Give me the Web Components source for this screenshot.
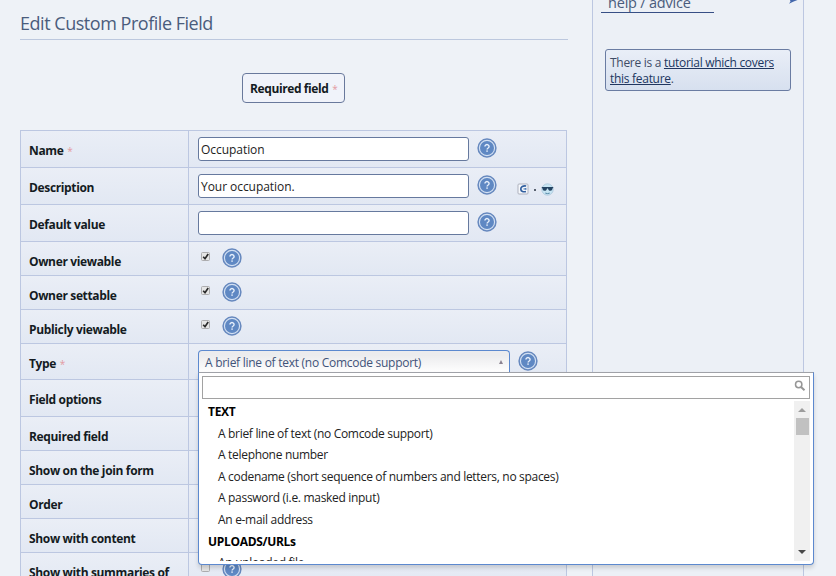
<!DOCTYPE html>
<html lang="en">
<head>
    <meta charset="UTF-8">
    <meta name="viewport" content="width=device-width, initial-scale=1.0">
    <title>Edit Custom Profile Field</title>
    <style>
        html, body {
            margin: 0;
            height: 576px;
            overflow: hidden;
        }

        body {
            background: #eef2f7;
            font-family: "Open Sans", "Noto Sans", sans-serif;
            font-size: 12px;
            color: #141b22;
        }
    </style>
</head>
<body>
    <profile-page>
        <page-title>Edit Custom Profile Field</page-title>
        <required-key>Required field</required-key>
        <field-table>
            <field-row label="Name" required><text-field value="Occupation"></text-field><help-icon></help-icon></field-row>
            <field-row label="Description"><text-field value="Your occupation."></text-field><help-icon></help-icon><comcode-tools></comcode-tools></field-row>
            <field-row label="Default value"><text-field></text-field><help-icon></help-icon></field-row>
            <field-row label="Owner viewable" size="small"><tick-box checked></tick-box><help-icon></help-icon></field-row>
            <field-row label="Owner settable" size="small"><tick-box checked></tick-box><help-icon></help-icon></field-row>
            <field-row label="Publicly viewable" size="small"><tick-box checked></tick-box><help-icon></help-icon></field-row>
            <field-row label="Type" required size="medium"><type-select value="A brief line of text (no Comcode support)"></type-select><help-icon></help-icon></field-row>
            <field-row label="Field options"></field-row>
            <field-row label="Required field" size="small"></field-row>
            <field-row label="Show on the join form" size="small"></field-row>
            <field-row label="Order" size="small"></field-row>
            <field-row label="Show with content" size="small"></field-row>
            <field-row label="Show with summaries of" size="small"><tick-box></tick-box><help-icon></help-icon></field-row>
        </field-table>
        <help-panel slot="side" heading="help / advice">There is a <u>tutorial which covers this feature</u>.</help-panel>
    </profile-page>

    <script>
        class BaseElement extends HTMLElement {
            constructor() {
                super();
                this.attachShadow({ mode: 'open' });
            }

            connectedCallback() {
                this.shadowRoot.innerHTML = this.render();
            }
        }

        class ProfilePage extends BaseElement {
            render() {
                return `
                <style>
                    :host { display: flex; height: 576px; overflow: hidden; }
                    main { width: 548px; margin-left: 20px; flex: none; }
                    aside { margin-left: 24px; flex: none; display: flex; }
                </style>
                <main><slot></slot></main>
                <aside><slot name="side"></slot></aside>
                `;
            }
        }
        customElements.define('profile-page', ProfilePage);

        class PageTitle extends BaseElement {
            render() {
                return `
                <style>
                    :host { display: block; height: 39px; border-bottom: 1px solid #bcc8de; }
                    h1 {
                        margin: 0;
                        padding-top: 11px;
                        font-size: 18px;
                        line-height: 25px;
                        font-weight: 400;
                        letter-spacing: -0.47px;
                        color: #4a5c7c;
                        white-space: nowrap;
                    }
                </style>
                <h1><slot></slot></h1>
                `;
            }
        }
        customElements.define('page-title', PageTitle);

        class RequiredKey extends BaseElement {
            render() {
                return `
                <style>
                    :host { display: flex; justify-content: center; padding: 33px 1px 27px 0; }
                    div {
                        box-sizing: border-box;
                        width: 103px;
                        height: 30px;
                        padding-left: 7px;
                        border: 1px solid #69799c;
                        border-radius: 4px;
                        background: #f0f3fa;
                        line-height: 29px;
                        font-weight: 700;
                        letter-spacing: -0.4px;
                        white-space: nowrap;
                    }
                    span { margin-left: 1px; font-weight: 400; font-size: 10px; color: #e39aa2; }
                </style>
                <div><slot></slot> <span>*</span></div>
                `;
            }
        }
        customElements.define('required-key', RequiredKey);

        class FieldTable extends BaseElement {
            render() {
                return `
                <style>
                    :host {
                        display: block;
                        box-sizing: border-box;
                        width: 547px;
                        border: 1px solid #bcc7e1;
                        border-width: 1px 1px 0;
                    }
                </style>
                <slot></slot>
                `;
            }
        }
        customElements.define('field-table', FieldTable);

        class FieldRow extends BaseElement {
            render() {
                const star = this.hasAttribute('required') ? ' <span>*</span>' : '';
                return `
                <style>
                    :host {
                        display: flex;
                        box-sizing: border-box;
                        height: 37px;
                        border-bottom: 1px solid #bcc7e1;
                        background: linear-gradient(#eaeef6, #e2e8f3);
                    }
                    :host([size=small]) { height: 34px; }
                    :host([size=medium]) { height: 36px; }
                    .label {
                        box-sizing: border-box;
                        width: 168px;
                        flex: none;
                        padding: 11px 0 0 8px;
                        border-right: 1px solid #bcc7e1;
                        line-height: 18px;
                        font-weight: 700;
                        letter-spacing: -0.35px;
                        white-space: nowrap;
                    }
                    .label span { margin-left: 1px; font-weight: 400; font-size: 10px; color: #e39aa2; }
                    .value { display: flex; align-items: flex-start; padding: 6px 0 0 9px; }
                    :host([size=small]) .value { padding-top: 5px; }
                </style>
                <div class="label">${this.getAttribute('label')}${star}</div>
                <div class="value"><slot></slot></div>
                `;
            }
        }
        customElements.define('field-row', FieldRow);

        class TextField extends BaseElement {
            render() {
                return `
                <style>
                    :host {
                        display: block;
                        box-sizing: border-box;
                        width: 271px;
                        height: 24px;
                        margin-right: 8px;
                        padding-left: 2px;
                        border: 1px solid #66799e;
                        border-radius: 3px;
                        background: #fff;
                        line-height: 23px;
                        letter-spacing: -0.05px;
                        color: #222;
                    }
                </style>
                ${this.getAttribute('value') || ''}
                `;
            }
        }
        customElements.define('text-field', TextField);

        class HelpIcon extends BaseElement {
            render() {
                return `
                <style>
                    :host { display: block; width: 20px; height: 20px; margin-top: 1px; }
                    svg { display: block; }
                </style>
                <svg width="20" height="20" viewBox="0 0 20 20">
                    <circle cx="10" cy="10" r="8.9" fill="#d3e0f3" stroke="#6688be" stroke-width="1.5"/>
                    <circle cx="10" cy="10" r="7" fill="#5f88c3"/>
                    <path d="M7.9 8.4a2.1 1.9 0 1 1 3.300 1.600c-.8.5-1.100.7-1.100 1.400" fill="none" stroke="#e6effb" stroke-width="1.400"/>
                    <rect x="9.300" y="12.400" width="1.500" height="1.400" fill="#e6effb"/>
                </svg>
                `;
            }
        }
        customElements.define('help-icon', HelpIcon);

        class ComcodeTools extends BaseElement {
            render() {
                return `
                <style>
                    :host { display: flex; align-items: center; margin: 8px 0 0 20px; gap: 5px; height: 14px; }
                    i { width: 2px; height: 2px; background: #59616f; margin-top: 2px; }
                    svg { display: block; }
                </style>
                <svg width="12" height="12" viewBox="0 0 12 12">
                    <rect x="1" y="1" width="10" height="10" rx="1" fill="#f6f8fc" stroke="#aeb1bd"/>
                    <path d="M9.2 3C6 2.500 3.700 3.900 3.800 6.100 3.900 8.500 6.400 9.200 9 8.500" fill="none" stroke="#315f9f" stroke-width="1.700"/>
                    <path d="M5.500 6 9.400 4.700v2.400z" fill="#4776b3"/>
                </svg>
                <i></i>
                <svg width="13" height="13" viewBox="0 0 13 13">
                    <circle cx="6.5" cy="6.5" r="5.7" fill="#c7e5f3" stroke="#a9c4d9" stroke-width=".8"/>
                    <path d="M.8 4h11.400v1l-.6.3c-.2 1.700-1 2.500-2.200 2.500S7.300 7 7 5.500H6C5.700 7 5 7.800 3.600 7.800S1.600 7 1.400 5.300L.8 5z" fill="#244463"/>
                    <path d="M4.300 10.100q2.200 1 4.400 0" fill="none" stroke="#5488a7"/>
                </svg>
                `;
            }
        }
        customElements.define('comcode-tools', ComcodeTools);

        class TickBox extends BaseElement {
            render() {
                const tick = this.hasAttribute('checked')
                    ? '<path d="M2.2 4.7 4 6.7 7.2 2" fill="none" stroke="#2a2a2a" stroke-width="1.7"/>' : '';
                return `
                <style>
                    :host { display: block; width: 9px; height: 9px; margin: 5px 12px 0 3px; }
                    svg { display: block; }
                </style>
                <svg width="9" height="9" viewBox="0 0 9 9">
                    <rect x=".5" y=".5" width="8" height="8" rx="1" fill="#e6e6e6" stroke="#adadaf"/>
                    ${tick}
                </svg>
                `;
            }
        }
        customElements.define('tick-box', TickBox);

        class TypeSelect extends BaseElement {
            render() {
                return `
                <style>
                    :host { display: block; position: relative; width: 312px; margin-right: 8px; }
                    .current {
                        box-sizing: border-box;
                        display: flex;
                        align-items: center;
                        justify-content: space-between;
                        height: 23px;
                        padding: 0 6px;
                        border: 1px solid #5c89cf;
                        border-bottom: 0;
                        border-radius: 4px 4px 0 0;
                        background: linear-gradient(#ececee 20%, #fff);
                        letter-spacing: -0.27px;
                        color: #3f5379;
                        white-space: nowrap;
                    }
                    .arrow { border: 2.5px solid transparent; border-top: 0; border-bottom: 4px solid #8b8291; }
                </style>
                <div class="current"><span>${this.getAttribute('value')}</span><i class="arrow"></i></div>
                <option-menu></option-menu>
                `;
            }
        }
        customElements.define('type-select', TypeSelect);

        class OptionMenu extends BaseElement {
            render() {
                const items = [
                    'A brief line of text (no Comcode support)',
                    'A telephone number',
                    'A codename (short sequence of numbers and letters, no spaces)',
                    'A password (i.e. masked input)',
                    'An e-mail address'
                ];
                return `
                <style>
                    :host {
                        position: absolute;
                        left: 0;
                        top: 22px;
                        z-index: 5;
                        box-sizing: border-box;
                        width: 616px;
                        height: 193px;
                        padding: 3px;
                        border: 1px solid #5c89cf;
                        border-top-color: #a0a2a8;
                        border-radius: 0 0 4px 4px;
                        background: #fff;
                        box-shadow: 0 3px 4px rgba(0, 0, 0, .15);
                        display: block;
                    }
                    .search {
                        box-sizing: border-box;
                        display: flex;
                        justify-content: flex-end;
                        height: 23px;
                        padding: 3px 3px 0 0;
                        border: 1px solid #a2a2a2;
                    }
                    .list { display: flex; height: 160px; margin-top: 2px; overflow: hidden; }
                    ul { flex: 1; margin: 0; padding: 0; list-style: none; white-space: nowrap; }
                    li { height: 21.6px; line-height: 21px; padding-left: 16px; letter-spacing: -0.31px; color: #222; }
                    li.group { padding-left: 6px; font-weight: 700; color: #000; }
                    .bar {
                        box-sizing: border-box;
                        display: flex;
                        flex-direction: column;
                        align-items: center;
                        width: 16px;
                        padding: 7px 0;
                        background: #f0f0f0;
                    }
                    .up { border: 4px solid transparent; border-top: 0; border-bottom-color: #9d9d9d; }
                    .thumb { width: 13px; height: 17px; margin: 6px 0 auto 1px; background: #c1c1c1; }
                    .down { border: 4px solid transparent; border-bottom: 0; border-top-color: #484848; }
                </style>
                <div class="search">
                    <svg width="12" height="12" viewBox="0 0 12 12">
                        <circle cx="4.7" cy="4.5" r="3.2" fill="none" stroke="#969696" stroke-width="1.5"/>
                        <path d="M7 7 10.5 10.3" stroke="#969696" stroke-width="2"/>
                    </svg>
                </div>
                <div class="list">
                    <ul>
                        <li class="group">TEXT</li>
                        ${items.map(item => `<li>${item}</li>`).join('')}
                        <li class="group">UPLOADS/URLs</li>
                        <li>An uploaded file</li>
                    </ul>
                    <div class="bar"><i class="up"></i><i class="thumb"></i><i class="down"></i></div>
                </div>
                `;
            }
        }
        customElements.define('option-menu', OptionMenu);

        class HelpPanel extends BaseElement {
            render() {
                return `
                <style>
                    :host {
                        display: block;
                        box-sizing: border-box;
                        width: 212px;
                        height: 576px;
                        border: 1px solid #bcc7e1;
                        border-width: 0 1px;
                        background: #ecf0f6;
                    }
                    header { display: flex; justify-content: space-between; height: 13px; }
                    h2 {
                        box-sizing: border-box;
                        width: 113px;
                        height: 13px;
                        margin: 0 0 0 8px;
                        padding-left: 7px;
                        border-bottom: 1px solid #374f85;
                        font-size: 14.5px;
                        line-height: 6px;
                        font-weight: 400;
                        letter-spacing: -0.2px;
                        color: #4a5c7c;
                        white-space: nowrap;
                    }
                    header svg { margin-right: 5px; }
                    .box {
                        box-sizing: border-box;
                        width: 186px;
                        height: 42px;
                        margin: 36px 0 0 12px;
                        padding: 5px 4px;
                        border: 1px solid #6a7ca2;
                        border-radius: 3px;
                        background: linear-gradient(#e9eef7, #d7e0ef);
                        line-height: 16px;
                        letter-spacing: -0.29px;
                        color: #3f4c66;
                    }
                    ::slotted(u) { color: #20365f; }
                </style>
                <header>
                    <h2>${this.getAttribute('heading')}</h2>
                    <svg width="10" height="5" viewBox="0 0 10 5"><path d="M2 0H9.500Q5 1.500 1 3.800L2.500 1.500z" fill="#4468ac"/></svg>
                </header>
                <div class="box"><slot></slot></div>
                `;
            }
        }
        customElements.define('help-panel', HelpPanel);
    </script>
</body>
</html>
